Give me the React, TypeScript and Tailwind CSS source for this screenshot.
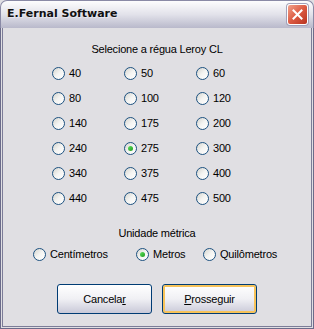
import React, { useState } from 'react';

// Leroy CL ruler choices, laid out 3 per row
const rulers = [
    '40', '50', '60',
    '80', '100', '120',
    '140', '175', '200',
    '240', '275', '300',
    '340', '375', '400',
    '440', '475', '500',
];

const units = [
    { label: 'Centímetros', width: 'w-[103px]' },
    { label: 'Metros', width: 'w-[67px]' },
    { label: 'Quilômetros', width: 'w-auto' },
];

const Radio: React.FC<{ checked: boolean }> = ({ checked }) => (
    <span className="flex h-[13px] w-[13px] shrink-0 items-center justify-center rounded-full border border-[#1c5180] bg-gradient-to-br from-[#d4d4ce] via-[#f4f4f2] to-white">
        {checked && (
            <span className="h-[5px] w-[5px] rounded-full bg-gradient-to-br from-[#5ee25e] to-[#1a9a1a]" />
        )}
    </span>
);

const App: React.FC = () => {
    const [ruler, setRuler] = useState('275');
    const [unit, setUnit] = useState('Metros');

    return (
        <div
            className="flex h-[329px] w-[314px] flex-col bg-[#e0dfe3] text-[11px] tracking-[-0.2px] text-black"
            style={{ fontFamily: '"Liberation Sans", Arial, sans-serif' }}
        >
            {/* Title bar */}
            <div className="flex h-[28px] shrink-0 items-center justify-between rounded-t-[7px] border border-b-0 border-[#8a8aa6] bg-gradient-to-b from-[#fdfdfe] via-[#e2e2ea] to-[#b9b9cb] pl-[6px] pr-[5px]">
                <span
                    className="text-[11px] font-bold tracking-normal text-[#111] [text-shadow:1px_1px_0_#e8e8f0]"
                    style={{ fontFamily: '"DejaVu Sans", sans-serif' }}
                >
                    E.Fernal Software
                </span>
                <button className="flex h-[21px] w-[21px] items-center justify-center rounded-[3px] border border-white bg-gradient-to-br from-[#f0a08a] via-[#dc5a42] to-[#b8321e] shadow-[0_0_0_1px_#a0a0b8]">
                    <svg width="11" height="11" viewBox="0 0 11 11">
                        <path d="M1.5 1.5 L9.5 9.5 M9.5 1.5 L1.5 9.5" stroke="white" strokeWidth="2" strokeLinecap="square" />
                    </svg>
                </button>
            </div>

            {/* Frame */}
            <div className="flex flex-1 flex-col border-x border-b border-[#6b6b8a]">
                <div className="flex flex-1 flex-col border-x border-b border-[#e0dfe3]">
                    <div className="flex flex-1 flex-col border-x border-b border-[#7c7c98]">
                        <div className="pt-[15px] text-center leading-[13px]">Selecione a régua Leroy CL</div>

                        <div className="mt-[5px] grid grid-cols-[72px_72px_72px] pl-[49px]">
                            {rulers.map((value) => (
                                <label
                                    key={value}
                                    className="flex h-[25px] cursor-default items-center gap-[4px]"
                                    onClick={() => setRuler(value)}
                                >
                                    <Radio checked={ruler === value} />
                                    <span>{value}</span>
                                </label>
                            ))}
                        </div>

                        <div className="mt-[16px] text-center leading-[13px]">Unidade métrica</div>

                        <div className="mt-[8px] flex h-[13px] items-center pl-[30px]">
                            {units.map((u) => (
                                <label
                                    key={u.label}
                                    className={`flex ${u.width} cursor-default items-center gap-[4px]`}
                                    onClick={() => setUnit(u.label)}
                                >
                                    <Radio checked={unit === u.label} />
                                    <span>{u.label}</span>
                                </label>
                            ))}
                        </div>

                        <div className="mt-[23px] flex justify-center gap-[10px]">
                            <button className="h-[30px] w-[95px] rounded-[3px] border border-[#003c74] bg-gradient-to-b from-white via-[#f0f0f4] to-[#c9c9d8] text-[11px]">
                                Cancela<span className="underline">r</span>
                            </button>
                            <button className="h-[30px] w-[95px] rounded-[3px] border border-[#003c74] bg-gradient-to-b from-white via-[#f0f0f4] to-[#c9c9d8] text-[11px] shadow-[inset_0_0_0_2px_#f7c35a]">
                                <span className="underline">P</span>rosseguir
                            </button>
                        </div>
                    </div>
                </div>
            </div>
        </div>
    );
};

export default App;
